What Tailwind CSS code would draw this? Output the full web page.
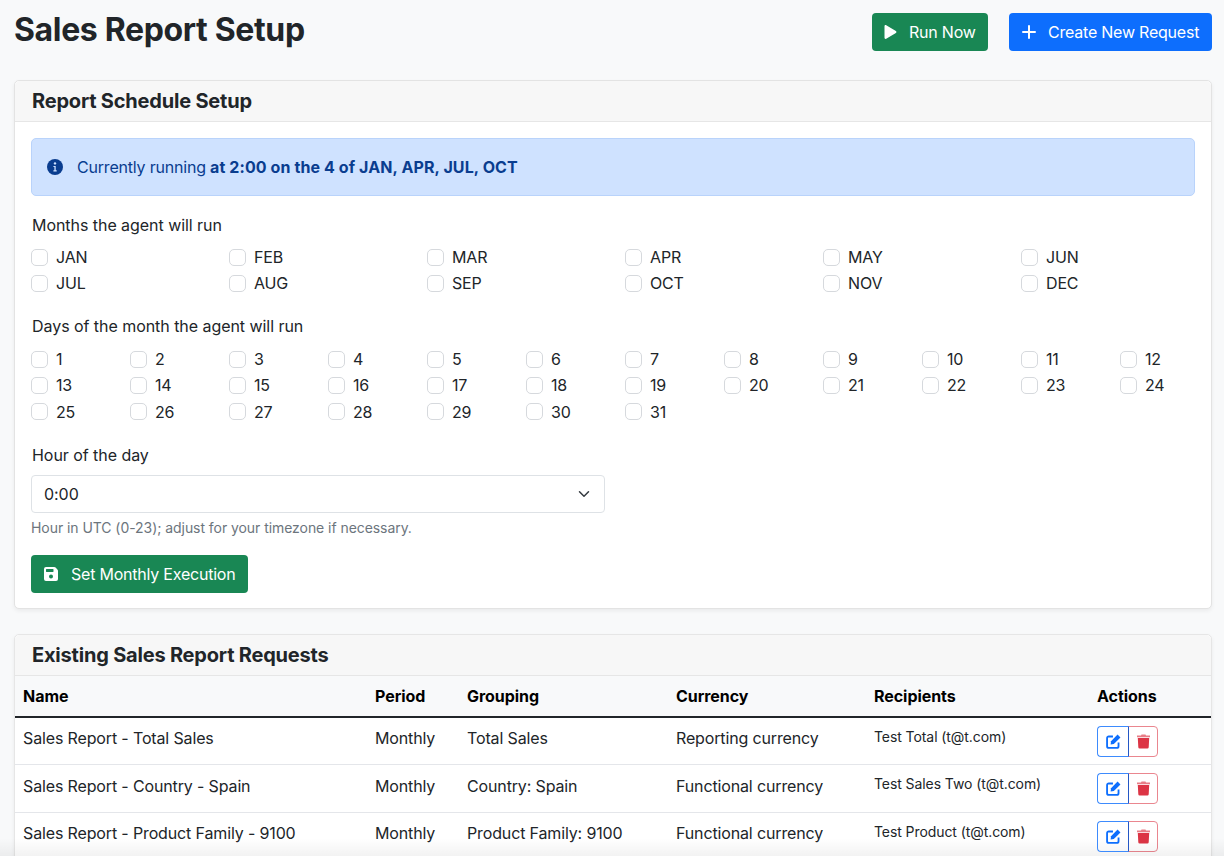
<!DOCTYPE html>
<html lang="en">
<head>
<meta charset="utf-8">
<title>Sales Report Setup</title>
<script src="https://cdn.jsdelivr.net/npm/@tailwindcss/browser@4"></script>
</head>
<body class="relative h-[856px] w-[1224px] overflow-hidden bg-[#f8f9fa] font-['Inter','Liberation_Sans',sans-serif] text-[16px] tracking-[-0.05px] text-[#212529]">
<main class="px-[14px] pr-[12px]">
  <header class="flex h-[80px] items-start justify-between">
    <h1 class="mt-[10px] text-[32px] leading-[40px] font-bold tracking-[-0.35px]">Sales Report Setup</h1>
    <div class="mt-[13px] flex gap-[21px] tracking-[-0.22px]">
      <button class="flex h-[38px] w-[116px] items-center rounded-[4px] bg-[#198754] pl-[12px] text-white">
        <svg class="mr-[12px] h-[14px] w-[13px]" viewBox="0 0 12 14" fill="currentColor"><path d="M0 1.200C0 .3.900-.3 1.700.2l9.700 5.800c.7.400.7 1.600 0 2l-9.700 5.800c-.8.500-1.700-.1-1.700-1z"/></svg>
        <span>Run Now</span>
      </button>
      <button class="flex h-[38px] w-[203px] items-center rounded-[4px] bg-[#0d6efd] pl-[13px] text-white">
        <svg class="mr-[12px] h-[14px] w-[14px]" viewBox="0 0 14 14" fill="none" stroke="currentColor" stroke-width="2" stroke-linecap="round"><path d="M7 1v12M1 7h12"/></svg>
        <span>Create New Request</span>
      </button>
    </div>
  </header>

  <section class="h-[529px] rounded-[5px] border border-[#e3e3e3] bg-white shadow-[0_2px_4px_rgba(0,0,0,0.06)]">
    <h2 class="flex h-[41px] items-center rounded-t-[5px] border-b border-[#e6e6e6] bg-[#f7f7f7] pl-[17px] text-[20px] font-bold tracking-[-0.2px]">Report Schedule Setup</h2>
    <div class="px-[16px] pt-[16px]">
      <div class="flex h-[58px] items-center rounded-[5px] border border-[#b9d3fb] bg-[#cfe2ff] pl-[15px] tracking-[-0.2px] text-[#0a3d8f]">
        <svg class="mr-[14px] h-[16px] w-[16px]" viewBox="0 0 16 16"><circle cx="8" cy="8" r="8" fill="currentColor"/><circle cx="8" cy="4.400" r="1.200" fill="#cfe2ff"/><path d="M6.400 6.900h2.300v4.300h1v1.200H6.400v-1.200h1v-3.100h-1z" fill="#cfe2ff"/></svg>
        <span>Currently running <strong class="font-bold tracking-[0.1px]">at 2:00 on the 4 of JAN, APR, JUL, OCT</strong></span>
      </div>

      <p class="mt-[17px] pl-px leading-[24px]">Months the agent will run</p>
      <div class="mt-[8px] -mr-[24px] grid grid-cols-6 gap-y-[2px] tracking-[-0.15px]">
        <label class="flex h-[24px] items-center gap-[8px]"><span class="h-[17px] w-[17px] rounded-[5px] border border-[#d6d9dd] bg-white"></span>JAN</label>
        <label class="flex h-[24px] items-center gap-[8px]"><span class="h-[17px] w-[17px] rounded-[5px] border border-[#d6d9dd] bg-white"></span>FEB</label>
        <label class="flex h-[24px] items-center gap-[8px]"><span class="h-[17px] w-[17px] rounded-[5px] border border-[#d6d9dd] bg-white"></span>MAR</label>
        <label class="flex h-[24px] items-center gap-[8px]"><span class="h-[17px] w-[17px] rounded-[5px] border border-[#d6d9dd] bg-white"></span>APR</label>
        <label class="flex h-[24px] items-center gap-[8px]"><span class="h-[17px] w-[17px] rounded-[5px] border border-[#d6d9dd] bg-white"></span>MAY</label>
        <label class="flex h-[24px] items-center gap-[8px]"><span class="h-[17px] w-[17px] rounded-[5px] border border-[#d6d9dd] bg-white"></span>JUN</label>
        <label class="flex h-[24px] items-center gap-[8px]"><span class="h-[17px] w-[17px] rounded-[5px] border border-[#d6d9dd] bg-white"></span>JUL</label>
        <label class="flex h-[24px] items-center gap-[8px]"><span class="h-[17px] w-[17px] rounded-[5px] border border-[#d6d9dd] bg-white"></span>AUG</label>
        <label class="flex h-[24px] items-center gap-[8px]"><span class="h-[17px] w-[17px] rounded-[5px] border border-[#d6d9dd] bg-white"></span>SEP</label>
        <label class="flex h-[24px] items-center gap-[8px]"><span class="h-[17px] w-[17px] rounded-[5px] border border-[#d6d9dd] bg-white"></span>OCT</label>
        <label class="flex h-[24px] items-center gap-[8px]"><span class="h-[17px] w-[17px] rounded-[5px] border border-[#d6d9dd] bg-white"></span>NOV</label>
        <label class="flex h-[24px] items-center gap-[8px]"><span class="h-[17px] w-[17px] rounded-[5px] border border-[#d6d9dd] bg-white"></span>DEC</label>
      </div>

      <p class="mt-[19px] pl-px leading-[24px]">Days of the month the agent will run</p>
      <div class="mt-[9px] -mr-[24px] grid grid-cols-12 gap-y-[2.250px] tracking-[-0.15px]">
        <label class="flex h-[24px] items-center gap-[8px]"><span class="h-[17px] w-[17px] rounded-[5px] border border-[#d6d9dd] bg-white"></span>1</label>
        <label class="flex h-[24px] items-center gap-[8px]"><span class="h-[17px] w-[17px] rounded-[5px] border border-[#d6d9dd] bg-white"></span>2</label>
        <label class="flex h-[24px] items-center gap-[8px]"><span class="h-[17px] w-[17px] rounded-[5px] border border-[#d6d9dd] bg-white"></span>3</label>
        <label class="flex h-[24px] items-center gap-[8px]"><span class="h-[17px] w-[17px] rounded-[5px] border border-[#d6d9dd] bg-white"></span>4</label>
        <label class="flex h-[24px] items-center gap-[8px]"><span class="h-[17px] w-[17px] rounded-[5px] border border-[#d6d9dd] bg-white"></span>5</label>
        <label class="flex h-[24px] items-center gap-[8px]"><span class="h-[17px] w-[17px] rounded-[5px] border border-[#d6d9dd] bg-white"></span>6</label>
        <label class="flex h-[24px] items-center gap-[8px]"><span class="h-[17px] w-[17px] rounded-[5px] border border-[#d6d9dd] bg-white"></span>7</label>
        <label class="flex h-[24px] items-center gap-[8px]"><span class="h-[17px] w-[17px] rounded-[5px] border border-[#d6d9dd] bg-white"></span>8</label>
        <label class="flex h-[24px] items-center gap-[8px]"><span class="h-[17px] w-[17px] rounded-[5px] border border-[#d6d9dd] bg-white"></span>9</label>
        <label class="flex h-[24px] items-center gap-[8px]"><span class="h-[17px] w-[17px] rounded-[5px] border border-[#d6d9dd] bg-white"></span>10</label>
        <label class="flex h-[24px] items-center gap-[8px]"><span class="h-[17px] w-[17px] rounded-[5px] border border-[#d6d9dd] bg-white"></span>11</label>
        <label class="flex h-[24px] items-center gap-[8px]"><span class="h-[17px] w-[17px] rounded-[5px] border border-[#d6d9dd] bg-white"></span>12</label>
        <label class="flex h-[24px] items-center gap-[8px]"><span class="h-[17px] w-[17px] rounded-[5px] border border-[#d6d9dd] bg-white"></span>13</label>
        <label class="flex h-[24px] items-center gap-[8px]"><span class="h-[17px] w-[17px] rounded-[5px] border border-[#d6d9dd] bg-white"></span>14</label>
        <label class="flex h-[24px] items-center gap-[8px]"><span class="h-[17px] w-[17px] rounded-[5px] border border-[#d6d9dd] bg-white"></span>15</label>
        <label class="flex h-[24px] items-center gap-[8px]"><span class="h-[17px] w-[17px] rounded-[5px] border border-[#d6d9dd] bg-white"></span>16</label>
        <label class="flex h-[24px] items-center gap-[8px]"><span class="h-[17px] w-[17px] rounded-[5px] border border-[#d6d9dd] bg-white"></span>17</label>
        <label class="flex h-[24px] items-center gap-[8px]"><span class="h-[17px] w-[17px] rounded-[5px] border border-[#d6d9dd] bg-white"></span>18</label>
        <label class="flex h-[24px] items-center gap-[8px]"><span class="h-[17px] w-[17px] rounded-[5px] border border-[#d6d9dd] bg-white"></span>19</label>
        <label class="flex h-[24px] items-center gap-[8px]"><span class="h-[17px] w-[17px] rounded-[5px] border border-[#d6d9dd] bg-white"></span>20</label>
        <label class="flex h-[24px] items-center gap-[8px]"><span class="h-[17px] w-[17px] rounded-[5px] border border-[#d6d9dd] bg-white"></span>21</label>
        <label class="flex h-[24px] items-center gap-[8px]"><span class="h-[17px] w-[17px] rounded-[5px] border border-[#d6d9dd] bg-white"></span>22</label>
        <label class="flex h-[24px] items-center gap-[8px]"><span class="h-[17px] w-[17px] rounded-[5px] border border-[#d6d9dd] bg-white"></span>23</label>
        <label class="flex h-[24px] items-center gap-[8px]"><span class="h-[17px] w-[17px] rounded-[5px] border border-[#d6d9dd] bg-white"></span>24</label>
        <label class="flex h-[24px] items-center gap-[8px]"><span class="h-[17px] w-[17px] rounded-[5px] border border-[#d6d9dd] bg-white"></span>25</label>
        <label class="flex h-[24px] items-center gap-[8px]"><span class="h-[17px] w-[17px] rounded-[5px] border border-[#d6d9dd] bg-white"></span>26</label>
        <label class="flex h-[24px] items-center gap-[8px]"><span class="h-[17px] w-[17px] rounded-[5px] border border-[#d6d9dd] bg-white"></span>27</label>
        <label class="flex h-[24px] items-center gap-[8px]"><span class="h-[17px] w-[17px] rounded-[5px] border border-[#d6d9dd] bg-white"></span>28</label>
        <label class="flex h-[24px] items-center gap-[8px]"><span class="h-[17px] w-[17px] rounded-[5px] border border-[#d6d9dd] bg-white"></span>29</label>
        <label class="flex h-[24px] items-center gap-[8px]"><span class="h-[17px] w-[17px] rounded-[5px] border border-[#d6d9dd] bg-white"></span>30</label>
        <label class="flex h-[24px] items-center gap-[8px]"><span class="h-[17px] w-[17px] rounded-[5px] border border-[#d6d9dd] bg-white"></span>31</label>
      </div>

      <p class="mt-[19.500px] pl-px leading-[24px]">Hour of the day</p>
      <div class="mt-[8px] flex h-[38px] w-[574px] items-center justify-between rounded-[4px] border border-[#dee2e6] bg-white pr-[14px] pl-[12px]">
        <span>0:00</span>
        <svg class="h-[12px] w-[12px]" viewBox="0 0 16 16" fill="none" stroke="#343a40" stroke-width="2" stroke-linecap="round" stroke-linejoin="round"><path d="M2 5l6 6 6-6"/></svg>
      </div>
      <p class="mt-[4px] text-[14px] leading-[21px] tracking-[-0.06px] text-[#6c757d]">Hour in UTC (0-23); adjust for your timezone if necessary.</p>
      <button class="mt-[17px] flex h-[38px] w-[217px] items-center rounded-[4px] bg-[#198754] pl-[13px] tracking-[-0.22px] text-white">
        <svg class="mr-[13px] h-[14px] w-[14px]" viewBox="0 0 14 14"><path fill="currentColor" fill-rule="evenodd" d="M2 0h8.200c.5 0 1 .2 1.400.6l1.800 1.800c.4.4.6.9.6 1.400V12a2 2 0 0 1-2 2H2a2 2 0 0 1-2-2V2a2 2 0 0 1 2-2zm0 2.500v2c0 .3.2.5.5.5h6.500c.3 0 .5-.2.5-.5v-2c0-.3-.2-.5-.5-.5H2.500c-.3 0-.5.2-.5.5zM7 7.500a2 2 0 1 0 0 4 2 2 0 0 0 0-4z"/></svg>
        <span>Set Monthly Execution</span>
      </button>
    </div>
  </section>

  <section class="mt-[25px] rounded-[5px] border border-[#e6e6e6] bg-white shadow-[0_2px_4px_rgba(0,0,0,0.06)]">
    <h2 class="flex h-[41px] items-center rounded-t-[5px] border-b border-[#e6e6e6] bg-[#f7f7f7] pl-[17px] text-[20px] font-bold tracking-[-0.2px]">Existing Sales Report Requests</h2>
    <table class="w-full table-fixed border-collapse">
      <thead>
        <tr class="h-[41px] border-b-2 border-[#212529] bg-[#f8f9fa] text-left text-black">
          <th class="w-[351px] pl-[8px] font-bold">Name</th>
          <th class="w-[92px] pl-[9px] font-bold">Period</th>
          <th class="w-[209px] pl-[9px] font-bold">Grouping</th>
          <th class="w-[198px] pl-[9px] font-bold">Currency</th>
          <th class="w-[223px] pl-[9px] font-bold">Recipients</th>
          <th class="pl-[9px] font-bold">Actions</th>
        </tr>
      </thead>
      <tbody class="tracking-[-0.14px]">
        <tr class="h-[47px] border-b border-[#e4e6ea] align-top">
          <td class="pt-[8px] pl-[8px] leading-[24px]">Sales Report - Total Sales</td>
          <td class="pt-[8px] pl-[9px] leading-[24px]">Monthly</td>
          <td class="pt-[8px] pl-[9px] leading-[24px]">Total Sales</td>
          <td class="pt-[8px] pl-[9px] leading-[24px]">Reporting currency</td>
          <td class="pt-[8px] pl-[9px] text-[14px] leading-[21px] tracking-[-0.08px]">Test Total (t@t.com)</td>
          <td class="pt-[8px] pl-[9px]">
            <div class="flex">
              <button class="relative z-10 flex h-[31px] w-[32px] items-center justify-center rounded-l-[4px] border border-[#3d8bfd] border-r-[#2457c5] text-[#0d6efd]"><svg class="h-[15px] w-[15px]" viewBox="0 0 14 14" fill="none" stroke="currentColor" stroke-width="1.700"><path d="M6.500 2.300H2.600A1.600 1.600 0 0 0 1 3.900v7.500A1.600 1.600 0 0 0 2.600 13h7.500a1.600 1.600 0 0 0 1.600-1.600V8"/><path d="M10.800.500 13.500 3.200 7.300 9.400l-3 .4.400-3z" fill="currentColor" stroke="none"/></svg></button>
              <button class="-ml-px flex h-[31px] w-[30px] items-center justify-center rounded-r-[4px] border border-[#ea868f] text-[#dc3545]"><svg class="h-[15px] w-[13px]" viewBox="0 0 13 14" fill="currentColor"><path opacity="0.65" d="M4.500 0h4l.5 1h3.500a.5.500 0 0 1 0 1.800H.5A.5.500 0 0 1 .5 1H4z"/><path d="M.8 3.500h11.400l-.5 9.300A1.300 1.300 0 0 1 10.400 14H2.600a1.300 1.300 0 0 1-1.300-1.200z"/></svg></button>
            </div>
          </td>
        </tr>
        <tr class="h-[48px] border-b border-[#e4e6ea] align-top">
          <td class="pt-[9px] pl-[8px] leading-[24px]">Sales Report - Country - Spain</td>
          <td class="pt-[9px] pl-[9px] leading-[24px]">Monthly</td>
          <td class="pt-[9px] pl-[9px] leading-[24px]">Country: Spain</td>
          <td class="pt-[9px] pl-[9px] leading-[24px]">Functional currency</td>
          <td class="pt-[8px] pl-[9px] text-[14px] leading-[21px] tracking-[-0.08px]">Test Sales Two (t@t.com)</td>
          <td class="pt-[8px] pl-[9px]">
            <div class="flex">
              <button class="relative z-10 flex h-[31px] w-[32px] items-center justify-center rounded-l-[4px] border border-[#3d8bfd] border-r-[#2457c5] text-[#0d6efd]"><svg class="h-[15px] w-[15px]" viewBox="0 0 14 14" fill="none" stroke="currentColor" stroke-width="1.700"><path d="M6.500 2.300H2.600A1.600 1.600 0 0 0 1 3.900v7.500A1.600 1.600 0 0 0 2.600 13h7.500a1.600 1.600 0 0 0 1.600-1.600V8"/><path d="M10.800.500 13.500 3.200 7.300 9.400l-3 .4.400-3z" fill="currentColor" stroke="none"/></svg></button>
              <button class="-ml-px flex h-[31px] w-[30px] items-center justify-center rounded-r-[4px] border border-[#ea868f] text-[#dc3545]"><svg class="h-[15px] w-[13px]" viewBox="0 0 13 14" fill="currentColor"><path opacity="0.65" d="M4.500 0h4l.5 1h3.500a.5.500 0 0 1 0 1.800H.5A.5.500 0 0 1 .5 1H4z"/><path d="M.8 3.500h11.400l-.5 9.300A1.300 1.300 0 0 1 10.400 14H2.600a1.300 1.300 0 0 1-1.300-1.200z"/></svg></button>
            </div>
          </td>
        </tr>
        <tr class="h-[48px] align-top">
          <td class="pt-[8px] pl-[8px] leading-[24px]">Sales Report - Product Family - 9100</td>
          <td class="pt-[8px] pl-[9px] leading-[24px]">Monthly</td>
          <td class="pt-[8px] pl-[9px] leading-[24px]">Product Family: 9100</td>
          <td class="pt-[8px] pl-[9px] leading-[24px]">Functional currency</td>
          <td class="pt-[8px] pl-[9px] text-[14px] leading-[21px] tracking-[-0.08px]">Test Product (t@t.com)</td>
          <td class="pt-[8px] pl-[9px]">
            <div class="flex">
              <button class="relative z-10 flex h-[31px] w-[32px] items-center justify-center rounded-l-[4px] border border-[#3d8bfd] border-r-[#2457c5] text-[#0d6efd]"><svg class="h-[15px] w-[15px]" viewBox="0 0 14 14" fill="none" stroke="currentColor" stroke-width="1.700"><path d="M6.500 2.300H2.600A1.600 1.600 0 0 0 1 3.900v7.500A1.600 1.600 0 0 0 2.600 13h7.500a1.600 1.600 0 0 0 1.600-1.600V8"/><path d="M10.800.500 13.500 3.200 7.300 9.400l-3 .4.400-3z" fill="currentColor" stroke="none"/></svg></button>
              <button class="-ml-px flex h-[31px] w-[30px] items-center justify-center rounded-r-[4px] border border-[#ea868f] text-[#dc3545]"><svg class="h-[15px] w-[13px]" viewBox="0 0 13 14" fill="currentColor"><path opacity="0.65" d="M4.500 0h4l.5 1h3.500a.5.500 0 0 1 0 1.800H.5A.5.500 0 0 1 .5 1H4z"/><path d="M.8 3.500h11.400l-.5 9.300A1.300 1.300 0 0 1 10.400 14H2.600a1.300 1.300 0 0 1-1.300-1.200z"/></svg></button>
            </div>
          </td>
        </tr>
      </tbody>
    </table>
  </section>
</main>
<div class="pointer-events-none absolute inset-x-0 bottom-0 h-[18px] bg-gradient-to-b from-transparent to-black/5"></div>
</body>
</html>
